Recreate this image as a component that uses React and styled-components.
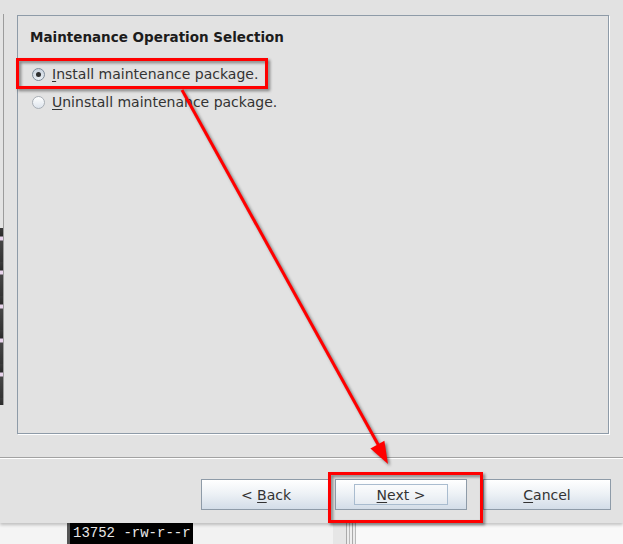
import React from "react";
import styled, { createGlobalStyle } from "styled-components";

const GlobalStyle = createGlobalStyle`
  html, body {
    margin: 0;
    background: #e2e2e2;
    font-family: "DejaVu Sans", "Liberation Sans", sans-serif;
  }
`;

const Page = styled.div`
  position: relative;
  width: 623px;
  height: 544px;
  overflow: hidden;
  display: flex;
  flex-direction: column;
`;

const Dialog = styled.div`
  height: 523px;
  flex: 0 0 523px;
  display: flex;
  flex-direction: column;
  background: #e2e2e2;
  box-shadow: 0 2px 3px rgba(0, 0, 0, 0.22);
  position: relative;
  z-index: 1;
`;

const TopArea = styled.div`
  display: flex;
  height: 434px;
`;

const LeftEdge = styled.div`
  width: 3px;
  margin-top: 14px;
  height: 391px;
  border-right: 1px solid #9c9c9c;
  display: flex;
  flex-direction: column;
`;

const EdgeLight = styled.div`
  flex: 0 0 214px;
  background: #e4e4e4;
`;

const EdgeDark = styled.div`
  flex: 1;
  background: repeating-linear-gradient(
    180deg,
    #3a3a3a 0px,
    #2a2a2a 8px,
    #e8d4ec 9px,
    #e8d4ec 12px,
    #454545 13px,
    #333 34px
  );
`;

const PanelWrap = styled.div`
  flex: 1;
  padding: 15px 14px 0 13px;
`;

const Panel = styled.div`
  box-sizing: border-box;
  height: 419px;
  border: 1px solid #8e9ba8;
  box-shadow: 1px 1px 0 #ffffff;
  padding: 13px 12px;
`;

const Title = styled.div`
  font-size: 13.5px;
  line-height: 16px;
  font-weight: bold;
  color: #1c1c1c;
  margin-bottom: 15px;
`;

const RadioRow = styled.label`
  display: flex;
  align-items: center;
  height: 28px;
  margin-left: 2px;
  gap: 7px;
  font-size: 14px;
  color: #333;
`;

const Circle = styled.span`
  position: relative;
  box-sizing: border-box;
  width: 13px;
  height: 13px;
  border-radius: 50%;
  border: 1px solid ${(p) => (p.$checked ? "#7d8b99" : "#a8aeb5")};
  background: ${(p) =>
    p.$checked
      ? "linear-gradient(180deg, #c9d3de 0%, #e9eef3 100%)"
      : "linear-gradient(180deg, #ffffff 0%, #dde4ec 100%)"};
  &::after {
    content: "";
    display: ${(p) => (p.$checked ? "block" : "none")};
    position: absolute;
    left: 3px;
    top: 3px;
    width: 5px;
    height: 5px;
    border-radius: 50%;
    background: #2e2e2e;
  }
`;

const U = styled.span`
  text-decoration: underline;
  text-underline-offset: 2px;
`;

const Separator = styled.div`
  margin-top: 23px;
  border-top: 1px solid #a2a2a2;
  border-bottom: 1px solid #ffffff;
`;

const ButtonBar = styled.div`
  display: flex;
  justify-content: flex-end;
  margin-top: 20px;
  padding-right: 12px;
`;

const Button = styled.button`
  box-sizing: border-box;
  width: ${(p) => p.$w}px;
  height: 31px;
  margin-left: ${(p) => p.$gap}px;
  border: 1px solid #8e9ba8;
  border-radius: 0;
  background: linear-gradient(180deg, #ffffff 0%, #eef2f6 45%, #d3dde8 100%);
  font-family: "DejaVu Sans", "Liberation Sans", sans-serif;
  font-size: 14px;
  color: #333;
  display: flex;
  align-items: center;
  justify-content: center;
  padding: 0;
`;

const Focus = styled.span`
  box-sizing: border-box;
  width: 94px;
  height: 21px;
  border: 1px solid #a9bccf;
  background: rgba(255, 255, 255, 0.25);
  display: flex;
  align-items: center;
  justify-content: center;
`;

const BottomStrip = styled.div`
  flex: 1;
  display: flex;
`;

const Blank = styled.div`
  width: ${(p) => p.$w}px;
  flex: ${(p) => (p.$w ? "0 0 auto" : "1")};
  background: ${(p) => p.$bg};
`;

const Terminal = styled.div`
  width: 120px;
  border-left: 3px solid #555;
  padding-left: 3px;
  background: #000;
  color: #e8e8e8;
  font-family: "Liberation Mono", "DejaVu Sans Mono", monospace;
  font-size: 14px;
  line-height: 21px;
  white-space: nowrap;
`;

const Divider = styled.div`
  width: 2px;
  border-left: 1px solid #aaaaaa;
  border-right: 1px solid #b8b8b8;
  background: #ececec;
`;

const Overlay = styled.svg`
  position: absolute;
  left: 0;
  top: 0;
  z-index: 5;
  pointer-events: none;
  filter: drop-shadow(2px 2px 1.5px rgba(0, 0, 0, 0.45));
`;

function Radio({ checked, mnemonic, rest }) {
  return (
    <RadioRow>
      <Circle $checked={checked} />
      <span>
        <U>{mnemonic}</U>
        {rest}
      </span>
    </RadioRow>
  );
}

export default function App() {
  return (
    <Page>
      <GlobalStyle />
      <Dialog>
        <TopArea>
          <LeftEdge>
            <EdgeLight />
            <EdgeDark />
          </LeftEdge>
          <PanelWrap>
            <Panel>
              <Title>Maintenance Operation Selection</Title>
              <Radio checked mnemonic="I" rest="nstall maintenance package." />
              <Radio mnemonic="U" rest="ninstall maintenance package." />
            </Panel>
          </PanelWrap>
        </TopArea>
        <Separator />
        <ButtonBar>
          <Button $w={130} $gap={0}>
            &lt;&nbsp;<U>B</U>ack
          </Button>
          <Button $w={132} $gap={4}>
            <Focus>
              <U>N</U>ext &gt;
            </Focus>
          </Button>
          <Button $w={128} $gap={16}>
            <U>C</U>ancel
          </Button>
        </ButtonBar>
      </Dialog>
      <BottomStrip>
        <Blank $w={67} $bg="#f4f4f4" />
        <Terminal>13752 -rw-r--r</Terminal>
        <Blank $w={140} $bg="#f2f2f2" />
        <Blank $w={13} $bg="#e6e6e6" />
        <Divider />
        <Blank $w={2} $bg="#f0f0f0" />
        <Divider />
        <Blank $bg="#f9f9f9" />
      </BottomStrip>
      <Overlay width="623" height="544" viewBox="0 0 623 544">
        <g fill="none" stroke="#ff0000" strokeWidth="3">
          <rect x="17.5" y="59.5" width="249" height="28" />
          <rect x="329.5" y="473.5" width="152" height="48" />
          <line x1="182" y1="90" x2="380" y2="448" />
        </g>
        <polygon points="388,464 370.4,448.6 384.4,440.8" fill="#ff0000" />
      </Overlay>
    </Page>
  );
}
